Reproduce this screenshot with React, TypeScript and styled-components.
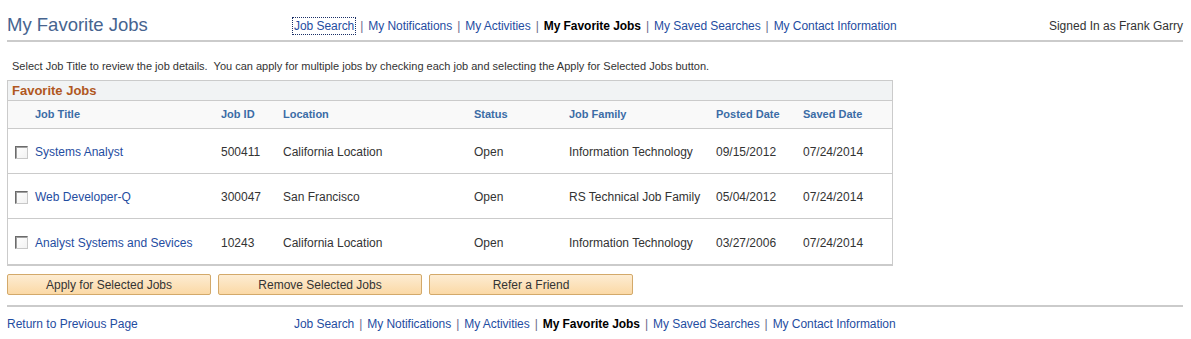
import React from "react";
import styled, { createGlobalStyle } from "styled-components";

const Global = createGlobalStyle`
  html, body { margin: 0; padding: 0; background: #fff; }
  body { font-family: "Liberation Sans", Arial, sans-serif; color: #333; }
  * { box-sizing: border-box; }
`;

const Page = styled.div`
  width: 1191px;
  padding: 0 8px 0 7px;
`;

const TopBar = styled.div`
  display: flex;
  align-items: flex-end;
  height: 42px;
  border-bottom: 2px solid #cbcbcb;
  padding-bottom: 6px;
`;

const Title = styled.h1`
  margin: 0 0 -2px 0;
  width: 286px;
  font-size: 18.5px;
  font-weight: normal;
  color: #46648f;
  line-height: 22px;
`;

const Nav = styled.nav`
  display: flex;
  align-items: center;
  font-size: 12px;
  line-height: 16px;
  letter-spacing: -0.05px;
  padding-bottom: 0;
`;

const NavLink = styled.a<{ $current?: boolean; $focus?: boolean }>`
  color: ${(p) => (p.$current ? "#000" : "#1f4da1")};
  font-weight: ${(p) => (p.$current ? "bold" : "normal")};
  text-decoration: none;
  outline: ${(p) => (p.$focus ? "1px dotted #1a2f66" : "none")};
  padding: ${(p) => (p.$focus ? "0 1px" : "0")};
`;

const Sep = styled.span`
  color: #6a6a8a;
  margin: 0 5px;
`;

const Signed = styled.div`
  margin-left: auto;
  font-size: 12px;
  color: #333;
  line-height: 16px;
  padding-bottom: 0;
`;

const Intro = styled.p`
  margin: 17px 0 0 5px;
  font-size: 11px;
  line-height: 14px;
  color: #333;
`;

const Grid = styled.div`
  margin-top: 7px;
  width: 886px;
  border: 1px solid #cbcbcb;
  border-bottom-width: 2px;
`;

const GridTitle = styled.div`
  height: 20px;
  background: #f1f3f4;
  border-bottom: 1px solid #cbcbcb;
  color: #b0571f;
  font-weight: bold;
  font-size: 13px;
  line-height: 19px;
  padding-left: 4px;
`;

const cols = "27px 186px 62px 191px 95px 147px 87px 1fr";

const HeadRow = styled.div`
  display: grid;
  grid-template-columns: ${cols};
  height: 28px;
  align-items: center;
  background: #f9f9f9;
  border-bottom: 1px solid #cbcbcb;
  font-size: 11px;
  font-weight: bold;
  color: #3b6ca6;
  padding-bottom: 2px;
`;

const Row = styled.div<{ $last?: boolean }>`
  display: grid;
  grid-template-columns: ${cols};
  height: 45px;
  align-items: center;
  border-bottom: ${(p) => (p.$last ? "none" : "1px solid #cbcbcb")};
  font-size: 12px;
  color: #333;
  padding-top: 2px;
`;

const Cell = styled.div`
  white-space: nowrap;
`;

const Check = styled.span`
  display: block;
  width: 13px;
  height: 13px;
  margin-left: 7px;
  border: 1px solid;
  border-color: #6b6b6b #c8c8c8 #c8c8c8 #6b6b6b;
  background: linear-gradient(135deg, #fff 0%, #f2f2f2 100%);
  box-shadow: inset 1px 1px 0 #a0a0a0;
`;

const TitleLink = styled.a`
  color: #1f4da1;
  text-decoration: none;
`;

const Buttons = styled.div`
  display: flex;
  gap: 7px;
  margin-top: 8px;
`;

const Button = styled.button`
  width: 204px;
  height: 21px;
  border: 1px solid #d3a96a;
  border-radius: 2px;
  background: linear-gradient(#fdecd2, #fbd9a6);
  font-family: "Liberation Sans", Arial, sans-serif;
  font-size: 12px;
  color: #333;
  padding: 0;
`;

const Divider = styled.div`
  margin-top: 10px;
  border-top: 2px solid #cbcbcb;
`;

const Footer = styled.div`
  display: flex;
  align-items: center;
  margin-top: 9px;
  font-size: 12px;
  line-height: 16px;
`;

const Return = styled.a`
  width: 287px;
  color: #1f4da1;
  text-decoration: none;
`;

const jobs = [
  ["Systems Analyst", "500411", "California Location", "Open", "Information Technology", "09/15/2012", "07/24/2014"],
  ["Web Developer-Q", "300047", "San Francisco", "Open", "RS Technical Job Family", "05/04/2012", "07/24/2014"],
  ["Analyst Systems and Sevices", "10243", "California Location", "Open", "Information Technology", "03/27/2006", "07/24/2014"],
];

const navItems = ["Job Search", "My Notifications", "My Activities", "My Favorite Jobs", "My Saved Searches", "My Contact Information"];

function NavBar({ focusFirst }: { focusFirst?: boolean }) {
  return (
    <Nav>
      {navItems.map((n, i) => (
        <React.Fragment key={n}>
          {i > 0 && <Sep>|</Sep>}
          <NavLink href="#" $current={n === "My Favorite Jobs"} $focus={focusFirst && i === 0}>
            {n}
          </NavLink>
        </React.Fragment>
      ))}
    </Nav>
  );
}

export default function App() {
  return (
    <Page>
      <Global />
      <TopBar>
        <Title>My Favorite Jobs</Title>
        <NavBar focusFirst />
        <Signed>Signed In as Frank Garry</Signed>
      </TopBar>
      <Intro>
        Select Job Title to review the job details.&nbsp; You can apply for multiple jobs by checking each job and selecting the Apply for Selected Jobs button.
      </Intro>
      <Grid>
        <GridTitle>Favorite Jobs</GridTitle>
        <HeadRow>
          <Cell />
          <Cell>Job Title</Cell>
          <Cell>Job ID</Cell>
          <Cell>Location</Cell>
          <Cell>Status</Cell>
          <Cell>Job Family</Cell>
          <Cell>Posted Date</Cell>
          <Cell>Saved Date</Cell>
        </HeadRow>
        {jobs.map((j, i) => (
          <Row key={j[1]} $last={i === jobs.length - 1}>
            <Cell>
              <Check />
            </Cell>
            <Cell>
              <TitleLink href="#">{j[0]}</TitleLink>
            </Cell>
            {j.slice(1).map((v, k) => (
              <Cell key={k}>{v}</Cell>
            ))}
          </Row>
        ))}
      </Grid>
      <Buttons>
        <Button>Apply for Selected Jobs</Button>
        <Button>Remove Selected Jobs</Button>
        <Button>Refer a Friend</Button>
      </Buttons>
      <Divider />
      <Footer>
        <Return href="#">Return to Previous Page</Return>
        <NavBar />
      </Footer>
    </Page>
  );
}
